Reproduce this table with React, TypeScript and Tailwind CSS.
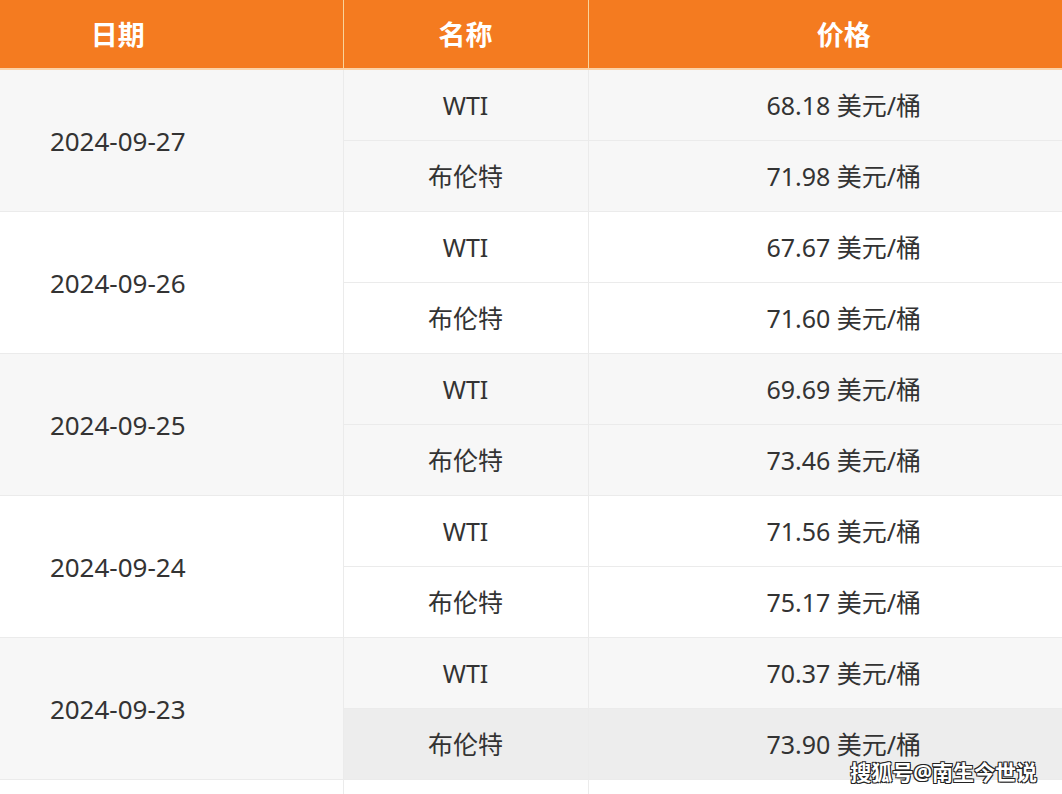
const rows = [
  { date: '2024-09-27', wti: '68.18', brent: '71.98' },
  { date: '2024-09-26', wti: '67.67', brent: '71.60' },
  { date: '2024-09-25', wti: '69.69', brent: '73.46' },
  { date: '2024-09-24', wti: '71.56', brent: '75.17' },
  { date: '2024-09-23', wti: '70.37', brent: '73.90' },
]

const font = { fontFamily: '"Noto Sans", "Noto Sans CJK SC", sans-serif' }

export default function App() {
  return (
    <div className="relative w-[1062px] h-[794px] overflow-hidden bg-white" style={font}>
      <table className="w-[1062px] border-collapse table-fixed text-[25px] text-[#333]">
        <colgroup>
          <col className="w-[343px]" />
          <col className="w-[245px]" />
          <col className="w-[474px]" />
        </colgroup>
        <thead>
          <tr className="h-[69px] bg-[#f47b20] text-white border-b-2 border-[#fbd3a8]">
            <th className="font-bold text-[27px] pt-[3px] pr-[107px] border-r border-[#f9d49a]">日期</th>
            <th className="font-bold text-[27px] pt-[3px] border-r border-[#f9d49a]">名称</th>
            <th className="font-bold text-[27px] pt-[3px] pl-[37px]">价格</th>
          </tr>
        </thead>
        <tbody>
          {rows.map((r, i) => {
            const bg = i % 2 === 0 ? 'bg-[#f7f7f7]' : 'bg-white'
            const last = i === rows.length - 1
            return [
              <tr key={r.date + 'a'} className={`h-[71px] ${bg}`}>
                <td rowSpan={2} className="text-center text-[26px] pt-[2px] pr-[107px] border-b border-r border-[#ebebeb]">
                  {r.date}
                </td>
                <td className="text-center pt-[2px] border-b border-r border-[#ebebeb]">WTI</td>
                <td className="text-center pt-[2px] pl-[37px] border-b border-[#ebebeb]">{r.wti} 美元/桶</td>
              </tr>,
              <tr key={r.date + 'b'} className={`h-[71px] ${last ? 'bg-[#ededed]' : bg}`}>
                <td className="text-center pt-[2px] border-b border-r border-[#ebebeb]">布伦特</td>
                <td className="text-center pt-[2px] pl-[37px] border-b border-[#ebebeb]">{r.brent} 美元/桶</td>
              </tr>,
            ]
          })}
          <tr className="h-[71px] bg-white">
            <td className="border-r border-[#ebebeb]"></td>
            <td className="border-r border-[#ebebeb]"></td>
            <td></td>
          </tr>
        </tbody>
      </table>
      <div
        className="absolute right-[25px] top-[757px] text-[21px] font-bold text-white"
        style={{ textShadow: '1px 1px 0 #222, -1px -1px 0 #222, 1px -1px 0 #222, -1px 1px 0 #222' }}
      >
        搜狐号@南生今世说
      </div>
    </div>
  )
}
